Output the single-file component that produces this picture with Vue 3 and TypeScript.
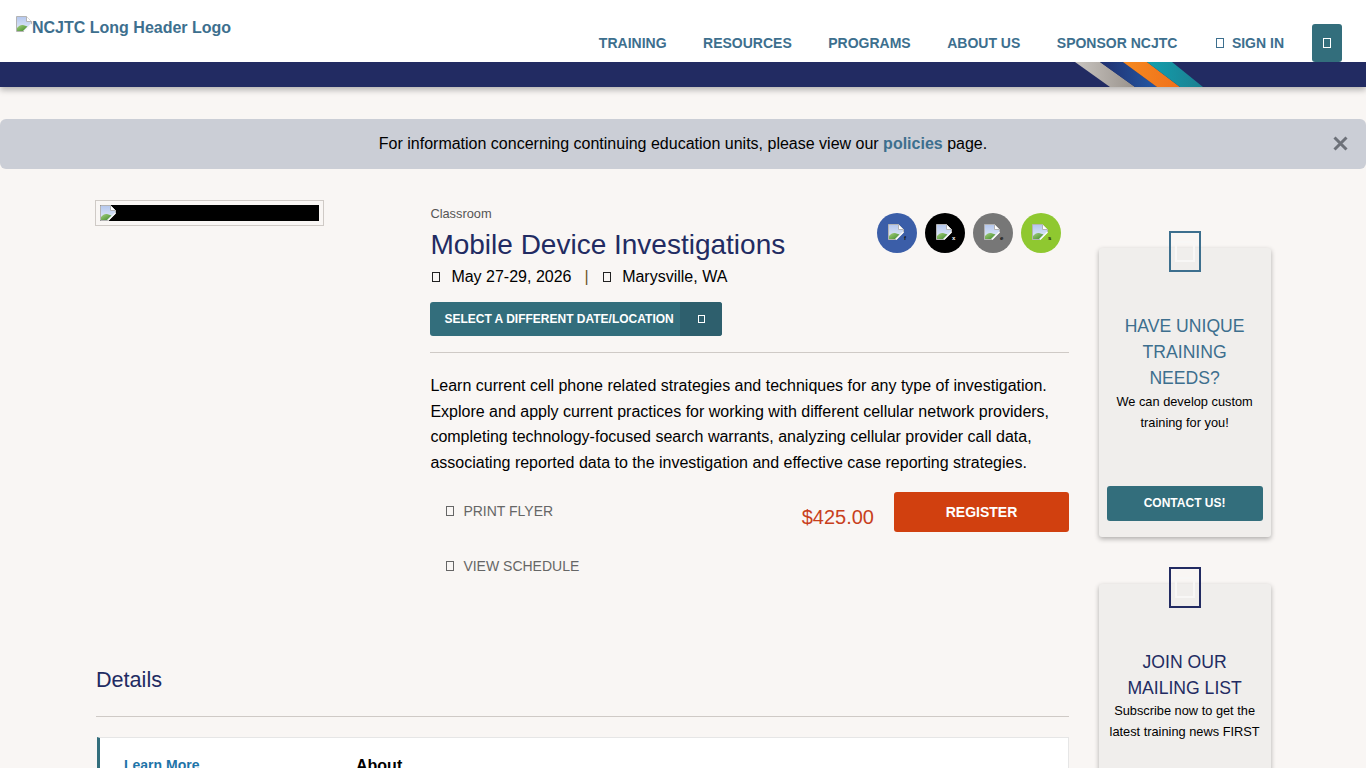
<template>
  <div class="page-wrap">
    <header class="site-header">
      <div class="header-top">
        <a class="logo">
          <svg class="broken" width="16" height="16" viewBox="0 0 16 16"><use href="#broken-img" /></svg>
          <span>NCJTC Long Header Logo</span>
        </a>
        <nav class="main-nav">
          <a v-for="item in navItems" :key="item">{{ item }}</a>
          <a class="sign-in"><i class="tofu"></i>SIGN IN</a>
          <button class="menu-btn"><i class="tofu light"></i></button>
        </nav>
      </div>
      <div class="band">
        <svg class="stripes" width="130" height="25" viewBox="0 0 130 25">
          <defs>
            <linearGradient id="gGrey" x1="0" x2="1" y1="0" y2="0">
              <stop offset="0" stop-color="#c9c5c0" />
              <stop offset="1" stop-color="#99928c" />
            </linearGradient>
            <linearGradient id="gBlue" x1="0" x2="1" y1="0" y2="0">
              <stop offset="0" stop-color="#20306f" />
              <stop offset="1" stop-color="#2458a4" />
            </linearGradient>
            <linearGradient id="gOrange" x1="0" x2="1" y1="0" y2="0">
              <stop offset="0" stop-color="#f58a20" />
              <stop offset="1" stop-color="#f0701a" />
            </linearGradient>
            <linearGradient id="gTeal" x1="0" x2="1" y1="0" y2="0">
              <stop offset="0" stop-color="#12a0ae" />
              <stop offset="1" stop-color="#1c7f90" />
            </linearGradient>
          </defs>
          <polygon points="0,0 25,0 60,25 35,25" fill="url(#gGrey)" />
          <polygon points="25,0 48,0 82,25 60,25" fill="url(#gBlue)" />
          <polygon points="48,0 72,0 105,25 82,25" fill="url(#gOrange)" />
          <polygon points="72,0 97,0 128,25 105,25" fill="url(#gTeal)" />
        </svg>
      </div>
    </header>

    <svg width="0" height="0" class="sprite">
      <defs>
        <linearGradient id="sky" x1="0" x2="0" y1="0" y2="1">
          <stop offset="0" stop-color="#b4c7ee" />
          <stop offset="1" stop-color="#e6edf9" />
        </linearGradient>
        <linearGradient id="hill" x1="0" x2="1" y1="0" y2="1">
          <stop offset="0" stop-color="#a6d080" />
          <stop offset="1" stop-color="#3f8a2a" />
        </linearGradient>
        <symbol id="broken-img" viewBox="0 0 16 16">
          <path d="M0.5 0.5H10.5L15.5 5.5V8L8 15.5H0.5Z" fill="url(#sky)" stroke="#b4b4b4" />
          <path d="M10.5 0.5V5.5H15.5" fill="#fff" stroke="#b4b4b4" />
          <path d="M1 15V12C3 9.5 5 8.5 7 9L11.5 10.5L7 15Z" fill="url(#hill)" />
          <path d="M8 15.5L15.5 8" stroke="#fff" stroke-width="1.2" />
        </symbol>
      </defs>
    </svg>

    <div class="alert">
      <p>For information concerning continuing education units, please view our <a>policies</a> page.</p>
      <span class="close">
        <svg width="15" height="15" viewBox="0 0 15 15"><path d="M1.5 1.5L13.5 13.5M13.5 1.5L1.5 13.5" stroke="#6d7179" stroke-width="3" /></svg>
      </span>
    </div>

    <div class="content">
      <main class="primary">
        <section class="course">
          <div class="thumb-col">
            <div class="thumb">
              <div class="redacted">
                <svg width="16" height="16" viewBox="0 0 16 16"><use href="#broken-img" /></svg>
              </div>
            </div>
          </div>
          <div class="course-body">
            <div class="course-head">
              <div>
                <div class="kind">Classroom</div>
                <h1>Mobile Device Investigations</h1>
                <div class="when">
                  <i class="tofu dark"></i><span>May 27-29, 2026</span>
                  <b class="sep">|</b>
                  <i class="tofu dark"></i><span>Marysville, WA</span>
                </div>
              </div>
              <div class="social">
                <span v-for="s in socials" :key="s.color" class="circle" :style="{ background: s.color }">
                  <svg width="16" height="16" viewBox="0 0 16 16"><use href="#broken-img" /></svg>
                  <em :style="{ color: s.alt }">{{ s.ch }}</em>
                </span>
              </div>
            </div>
            <div class="date-btn">
              <span class="date-label">SELECT A DIFFERENT DATE/LOCATION</span>
              <span class="date-caret"><i class="tofu light small"></i></span>
            </div>
            <hr />
            <p class="summary">
              Learn current cell phone related strategies and techniques for any type of investigation.
              Explore and apply current practices for working with different cellular network providers,
              completing technology-focused search warrants, analyzing cellular provider call data,
              associating reported data to the investigation and effective case reporting strategies.
            </p>
            <div class="actions">
              <div class="links">
                <a><i class="tofu grey"></i>PRINT FLYER</a>
                <a><i class="tofu grey"></i>VIEW SCHEDULE</a>
              </div>
              <div class="buy">
                <span class="price">$425.00</span>
                <button class="register">REGISTER</button>
              </div>
            </div>
          </div>
        </section>

        <section class="details">
          <h2>Details</h2>
          <hr />
          <div class="details-box">
            <a class="learn">Learn More</a>
            <h3>About</h3>
          </div>
        </section>
      </main>

      <aside class="sidebar">
        <div class="promo teal">
          <span class="promo-icon"><i></i></span>
          <h4>HAVE UNIQUE TRAINING NEEDS?</h4>
          <p>We can develop custom training for you!</p>
          <button class="contact">CONTACT US!</button>
        </div>
        <div class="promo navy">
          <span class="promo-icon"><i></i></span>
          <h4>JOIN OUR<br />MAILING LIST</h4>
          <p>Subscribe now to get the latest training news FIRST</p>
        </div>
      </aside>
    </div>
  </div>
</template>

<script setup lang="ts">
const navItems: string[] = ['TRAINING', 'RESOURCES', 'PROGRAMS', 'ABOUT US', 'SPONSOR NCJTC'];

const socials = [
  { color: '#3b5ea8', alt: '#111', ch: 'f' },
  { color: '#000000', alt: '#fff', ch: 'x' },
  { color: '#777777', alt: '#111', ch: 'e' },
  { color: '#8fc830', alt: '#111', ch: 's' },
];
</script>

<style>
html,
body {
  margin: 0;
  background: #f9f6f4;
  overflow: hidden;
}
</style>

<style scoped>
.page-wrap {
  height: 768px;
  overflow: hidden;
  font-family: "Liberation Sans", Arial, sans-serif;
  color: #000;
  background: #f9f6f4;
}

.sprite {
  position: absolute;
}

.tofu {
  display: inline-block;
  box-sizing: border-box;
  width: 8px;
  height: 10px;
  border: 1px solid #3d6f8e;
  flex: none;
}
.tofu.light {
  border-color: #fff;
}
.tofu.small {
  width: 7px;
  height: 8px;
}
.tofu.dark {
  border-color: #222;
}
.tofu.grey {
  border-color: #666;
}

.site-header {
  box-shadow: 0 3px 6px rgba(0, 0, 0, 0.28);
}
.header-top {
  height: 62px;
  background: #fff;
  display: flex;
  justify-content: space-between;
}
.logo {
  display: flex;
  align-items: flex-start;
  margin: 16px 0 0 16px;
  font-size: 16px;
  font-weight: 700;
  line-height: 24px;
  color: #3d6f8e;
}
.main-nav {
  display: flex;
  align-items: center;
  gap: 36.5px;
  height: 38px;
  margin-top: 24px;
  padding-right: 24px;
  font-size: 14px;
  font-weight: 700;
  color: #3d6f8e;
}
.main-nav a {
  white-space: nowrap;
}
.sign-in {
  display: flex;
  align-items: center;
  gap: 8px;
  margin-left: 2px;
}
.menu-btn {
  width: 30px;
  height: 38px;
  margin-left: -8.5px;
  padding: 0;
  border: 0;
  border-radius: 3px;
  background: #336e7c;
  display: flex;
  align-items: center;
  justify-content: center;
}
.band {
  position: relative;
  height: 25px;
  background: #222b62;
}
.stripes {
  position: absolute;
  left: 1075px;
  top: 0;
}

.alert {
  position: relative;
  margin-top: 32px;
  height: 50px;
  border-radius: 6px;
  background: #cbced6;
  display: flex;
  align-items: center;
  justify-content: center;
  font-size: 16px;
}
.alert p {
  margin: 0;
}
.alert a {
  font-weight: 700;
  color: #3d6f8e;
}
.close {
  position: absolute;
  right: 18px;
  top: 17px;
  line-height: 0;
}

.content {
  display: flex;
  gap: 29.6px;
  padding: 0 96px;
}
.primary {
  width: 973px;
  flex: none;
  padding-top: 31px;
}
.course {
  display: flex;
}
.thumb-col {
  width: 334.4px;
  flex: none;
}
.thumb {
  width: 229px;
  height: 26px;
  margin-left: -1px;
  box-sizing: border-box;
  border: 1px solid #cfcac6;
  padding: 4px;
}
.redacted {
  height: 16px;
  background: #000;
  line-height: 0;
}
.course-body {
  width: 638.6px;
}
.course-head {
  display: flex;
  justify-content: space-between;
}
.kind {
  margin-top: 6px;
  font-size: 12.8px;
  line-height: 15px;
  color: #555;
}
h1 {
  margin: 7px 0 0;
  font-size: 28px;
  font-weight: 400;
  line-height: 34px;
  color: #222b62;
}
.when {
  display: flex;
  align-items: center;
  margin-top: 5px;
  padding-left: 2px;
  font-size: 16px;
  line-height: 20px;
}
.when span {
  margin-left: 11px;
}
.sep {
  margin: 0 14.5px 0 13px;
  font-weight: 400;
  color: #6e5524;
}
.social {
  display: flex;
  gap: 8px;
  margin: 13px 8px 0 0;
}
.circle {
  position: relative;
  width: 40px;
  height: 40px;
  border-radius: 50%;
  display: flex;
  align-items: center;
  justify-content: center;
}
.circle svg {
  margin: -3px 2px 0 0;
}
.circle em {
  position: absolute;
  left: 27px;
  top: 20px;
  font-size: 6px;
  line-height: 10px;
  font-style: normal;
  font-weight: 700;
}
.date-btn {
  display: inline-flex;
  margin-top: 15px;
  height: 34px;
  border-radius: 3px;
  overflow: hidden;
  background: #336e7c;
  color: #fff;
  font-size: 12px;
  font-weight: 700;
  line-height: 34px;
}
.date-label {
  width: 250px;
  box-sizing: border-box;
  padding-left: 14px;
  white-space: nowrap;
}
.date-caret {
  width: 42px;
  background: #2e5f6d;
  display: flex;
  align-items: center;
  justify-content: center;
}
hr {
  margin: 16px 0 0;
  border: 0;
  border-top: 1px solid #cfcac6;
}
.summary {
  margin: 20px 0 0;
  font-size: 16px;
  line-height: 25.6px;
}
.actions {
  display: flex;
  justify-content: space-between;
  margin-top: 17px;
}
.links {
  display: flex;
  flex-direction: column;
  gap: 39px;
  padding: 11px 0 0 16px;
  font-size: 14px;
  line-height: 16px;
  color: #666;
}
.links a {
  display: flex;
  align-items: center;
  gap: 9px;
}
.buy {
  display: flex;
  align-items: flex-start;
  gap: 20px;
}
.price {
  margin-top: 13px;
  font-size: 20px;
  line-height: 24px;
  color: #c8401c;
}
.register {
  width: 175px;
  height: 40px;
  border: 0;
  border-radius: 3px;
  background: #d1400f;
  color: #fff;
  font-family: "Liberation Sans", Arial, sans-serif;
  font-size: 14px;
  font-weight: 700;
}

.details {
  margin-top: 93px;
}
h2 {
  margin: 0;
  font-size: 21.6px;
  font-weight: 400;
  line-height: 26px;
  color: #222b62;
}
.details hr {
  margin-top: 23px;
}
.details-box {
  margin: 20px 0 0 1px;
  height: 80px;
  box-sizing: border-box;
  background: #fff;
  border: 1px solid #e6e6e6;
  border-left: 3px solid #336e7c;
  display: flex;
  padding: 19px 0 0 24px;
}
.learn {
  width: 232px;
  font-size: 14px;
  font-weight: 700;
  color: #1f74a8;
}
h3 {
  margin: 0;
  font-size: 16px;
  font-weight: 700;
}

.sidebar {
  width: 172px;
  flex: none;
  padding-top: 79px;
  display: flex;
  flex-direction: column;
  gap: 47px;
}
.promo {
  position: relative;
  height: 289px;
  flex: none;
  box-sizing: border-box;
  padding: 64.5px 8px 16px;
  background: #f0eeec;
  border-radius: 3px;
  box-shadow: 0 2px 5px rgba(0, 0, 0, 0.3);
  display: flex;
  flex-direction: column;
  text-align: center;
}
.promo-icon {
  position: absolute;
  left: 70.4px;
  top: -17px;
  width: 32px;
  height: 41px;
  box-sizing: border-box;
  border: 2px solid;
  display: flex;
  align-items: center;
  justify-content: center;
}
.promo-icon i {
  width: 16px;
  height: 17px;
  border: 2px solid #f8f7f6;
}
.promo.teal .promo-icon {
  border-color: #3d6f8e;
}
.promo.navy .promo-icon {
  border-color: #222b62;
}
h4 {
  margin: 0;
  padding: 0 8px;
  font-size: 17.6px;
  font-weight: 400;
  line-height: 26.4px;
}
.teal h4 {
  color: #3d6f8e;
}
.navy h4 {
  color: #222b62;
}
.promo p {
  margin: -1px 0 0;
  font-size: 12.8px;
  line-height: 21px;
}
.contact {
  margin-top: auto;
  height: 35px;
  padding: 0 0 2px;
  border: 0;
  border-radius: 3px;
  background: #336e7c;
  color: #fff;
  font-family: "Liberation Sans", Arial, sans-serif;
  font-size: 12px;
  font-weight: 700;
}
</style>
